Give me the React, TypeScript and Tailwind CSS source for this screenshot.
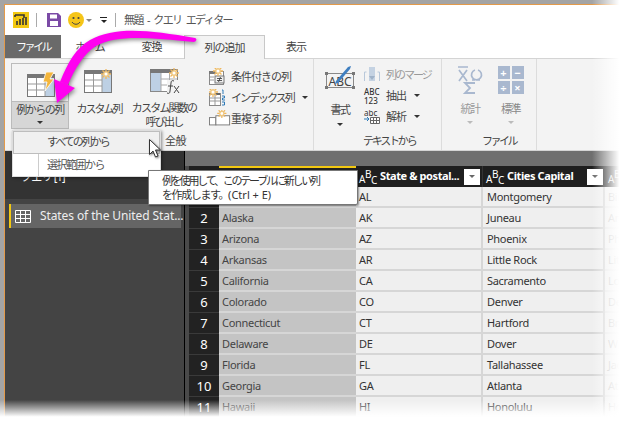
import React from 'react';

const rows = [
  ['1', 'Alabama', 'AL', 'Montgomery', 'Birmingham'],
  ['2', 'Alaska', 'AK', 'Juneau', 'Anchorage'],
  ['3', 'Arizona', 'AZ', 'Phoenix', 'Phoenix'],
  ['4', 'Arkansas', 'AR', 'Little Rock', 'Little Rock'],
  ['5', 'California', 'CA', 'Sacramento', 'Los Angeles'],
  ['6', 'Colorado', 'CO', 'Denver', 'Denver'],
  ['7', 'Connecticut', 'CT', 'Hartford', 'Bridgeport'],
  ['8', 'Delaware', 'DE', 'Dover', 'Wilmington'],
  ['9', 'Florida', 'FL', 'Tallahassee', 'Jacksonville'],
  ['10', 'Georgia', 'GA', 'Atlanta', 'Atlanta'],
  ['11', 'Hawaii', 'HI', 'Honolulu', 'Honolulu'],
];

const Caret = ({ className = 'border-t-[#333]' }: { className?: string }) => (
  <span className={`inline-block h-0 w-0 border-x-[3px] border-t-[3px] border-x-transparent ${className}`} />
);

const Sun = ({ x, y }: { x: number; y: number }) => (
  <g stroke="#f0b860" strokeWidth="1.3">
    <path d={`M${x - 5} ${y}h10M${x} ${y - 5}v10M${x - 3.5} ${y - 3.5}l7 7M${x + 3.5} ${y - 3.5}l-7 7`} />
    <circle cx={x} cy={y} r="2.2" fill="#fff" stroke="#f0c880" />
  </g>
);

const GridIcon = ({ bolt, sun }: { bolt?: boolean; sun?: boolean }) => (
  <svg width="32" height="26" viewBox="0 0 32 26">
    <rect x="1.5" y="2.5" width="27" height="22" fill="#fff" stroke="#777" />
    <rect x="1" y="2" width="28" height="4" fill="#777" />
    <rect x="19" y="6" width="9" height="18" fill="#bdd0e4" />
    <path d="M2 12h17M2 18h17M10.500 6v18M19 6v18" stroke="#999" />
    {sun && <Sun x={23} y={6} />}
    {bolt && <path d="M20 0h8l-4 7h4l-9 12 2-9h-4z" fill="#f4b63c" stroke="#fff" strokeWidth="0.8" />}
  </svg>
);

const FxIcon = () => (
  <svg width="32" height="28" viewBox="0 0 32 28">
    <rect x="0.500" y="2.500" width="27" height="22" fill="#fff" stroke="#888" />
    <rect x="0" y="2" width="24" height="4" fill="#777" />
    <rect x="1" y="6" width="10" height="18" fill="#bdd0e4" />
    <path d="M11 12h16M11 18h16M19.500 6v18M11 6v18" stroke="#aaa" />
    <Sun x={24} y={6} />
    <rect x="17" y="13" width="15" height="15" fill="#f3f3f3" />
    <path d="M24 14c-2-1-3 0-3 2l-1 8c0 2-1 3-3 2M18 19h5M24 19l5 7M29 19l-5 7" fill="none" stroke="#444" />
  </svg>
);

const CondIcon = () => (
  <svg width="17" height="17" viewBox="0 0 17 17">
    <rect x="0.500" y="3.500" width="14" height="13" fill="#fff" stroke="#888" />
    <rect x="0" y="3" width="8" height="3" fill="#777" />
    <path d="M1 9h4M1 12h4" stroke="#999" />
    <rect x="6" y="8" width="9" height="7" fill="#eee" stroke="#777" />
    <path d="M8 10.500h5M8 12.500h5M11.500 9l-2 5" stroke="#333" strokeWidth="0.8" />
    <Sun x={9} y={3} />
  </svg>
);

const IndexIcon = () => (
  <svg width="17" height="17" viewBox="0 0 17 17">
    <rect x="0.500" y="4.500" width="11" height="12" fill="#fff" stroke="#888" />
    <rect x="1" y="4" width="10" height="2" fill="#666" />
    <path d="M1 9h10M1 12h10M6 6v10" stroke="#999" />
    <Sun x={4} y={3} />
    <path d="M13 1h1v4M13 7h2.500v2h-2v2h2.500M13 13h2.500v3H13" fill="none" stroke="#2e7ab8" strokeWidth="1" />
  </svg>
);

const DupIcon = () => (
  <svg width="24" height="17" viewBox="0 0 24 17">
    <rect x="0.500" y="7.500" width="7" height="8" fill="#fff" stroke="#777" />
    <rect x="7.500" y="5.500" width="15" height="10" fill="#fff" stroke="#777" />
    <Sun x={14} y={3} />
  </svg>
);

const MergeIcon = () => (
  <svg width="16" height="15" viewBox="0 0 16 15">
    <path d="M.5 14V5h2M15.500 14V5h-2" fill="none" stroke="#b8c8da" />
    <rect x="5" y="0" width="6" height="14" fill="#c4d2e2" />
    <path d="M5 9l3 4 3-4z" fill="#9fb2c8" />
  </svg>
);

const AbcIcon = () => (
  <svg width="32" height="26" viewBox="0 0 32 26">
    <rect x="2.500" y="9.500" width="27" height="14" fill="none" stroke="#888" />
    <rect x="1" y="8" width="3" height="3" fill="#777" />
    <rect x="28" y="8" width="3" height="3" fill="#777" />
    <rect x="1" y="22" width="3" height="3" fill="#777" />
    <rect x="28" y="22" width="3" height="3" fill="#777" />
    <text x="16" y="22" textAnchor="middle" fontSize="12" fill="#444" fontFamily="Noto Sans">ABC</text>
    <path d="M12 17l12-14 3-1-1 3-12 14-3 1z" fill="#3f7fc0" />
  </svg>
);

const RibbonLabel = ({ children, className = '', tracking = 'tracking-[-1.5px]' }: { children: React.ReactNode; className?: string; tracking?: string }) => (
  <span className={`whitespace-nowrap text-center text-[11px] leading-[13px] text-[#444] ${tracking} ${className}`}>{children}</span>
);

const SmallItem = ({ icon, label, caret, muted, tracking = 'tracking-[-1px]' }: { icon: React.ReactNode; label: string; caret?: boolean; muted?: boolean; tracking?: string }) => (
  <div className="flex h-[21px] items-center">
    <span className="flex w-[22px] shrink-0 items-center">{icon}</span>
    <RibbonLabel tracking={tracking} className={muted ? 'text-[#999]' : ''}>{label}</RibbonLabel>
    {caret && <Caret className="ml-2 border-t-[#333]" />}
  </div>
);

const AbcType = ({ faded }: { faded?: boolean }) => (
  <span className={`flex w-[20px] shrink-0 items-center text-[10px] font-normal leading-none tracking-[-0.5px] ${faded ? 'text-[#ddd]' : 'text-white'}`}>
    <span className="translate-y-[2px]">A</span>
    <span className="-translate-y-[3px]">B</span>
    <span className="translate-y-[3px]">C</span>
  </span>
);

const FilterButton = () => (
  <span className="flex h-[16px] w-[16px] shrink-0 items-center justify-center bg-white">
    <Caret className="border-t-[#666]" />
  </span>
);

export default function App() {
  return (
    <div className="relative h-[421px] w-[626px] overflow-hidden bg-[#a4a4a4] pl-1 pt-1 font-['Noto_Sans','Noto_Sans_CJK_JP',sans-serif] text-[#333]">
      <div className="flex h-full flex-col border-l border-t border-[#e39a4a] bg-white">
        {/* title bar */}
        <div className="flex h-[30px] shrink-0 items-center">
          <span className="ml-2 flex h-[16px] w-[16px] items-center justify-center bg-[#f2c811]">
            <svg width="14" height="14" viewBox="0 0 14 14">
              <path d="M1 2h9v3M1 2v2M3 12V8M6 12V6M9 12V5M12 12V4" fill="none" stroke="#333" strokeWidth="1.600" />
            </svg>
          </span>
          <span className="ml-[7px] h-[14px] w-px bg-[#aaa]" />
          <svg className="ml-[10px]" width="14" height="14" viewBox="0 0 14 14">
            <path d="M0 0h11l3 3v11H0z" fill="#7b4aa6" />
            <rect x="3" y="1.500" width="7" height="4" fill="#fff" />
            <rect x="3" y="8" width="8" height="5" fill="#fff" />
          </svg>
          <svg className="ml-[7px]" width="16" height="16" viewBox="0 0 16 16">
            <circle cx="8" cy="8" r="8" fill="#f5c518" />
            <circle cx="5.500" cy="6" r="1.100" fill="#444" />
            <circle cx="10.500" cy="6" r="1.100" fill="#444" />
            <path d="M4 10c2 3 6 3 8 0" fill="none" stroke="#444" />
          </svg>
          <Caret className="ml-[2px] border-t-[#888]" />
          <span className="ml-[8px] flex flex-col items-center gap-[2px]">
            <span className="h-px w-[7px] bg-[#222]" />
            <Caret className="border-t-[#222]" />
          </span>
          <span className="ml-[8px] h-[14px] w-px bg-[#aaa]" />
          <span className="ml-[8px] text-[11px] tracking-[-1.6px] text-[#555] [word-spacing:3px]">無題 - クエリ エディター</span>
        </div>

        {/* tabs */}
        <div className="relative z-10 flex h-[23px] shrink-0 text-[11px] tracking-[-1px] text-[#444]">
          <div className="flex w-[56px] items-center justify-center bg-[#6a6a6a] pt-px tracking-[-2.500px] text-white">ファイル</div>
          <div className="flex w-[58px] items-center justify-center pt-px">ホーム</div>
          <div className="flex w-[65px] items-center justify-center pt-px">変換</div>
          <div className="flex h-[24px] w-[81px] items-center justify-center border-x border-t border-[#c8c8c8] bg-[#f3f3f3] pt-px">列の追加</div>
          <div className="flex w-[62px] items-center justify-center pt-px">表示</div>
        </div>

        {/* ribbon */}
        <div className="flex h-[93px] shrink-0 border-y border-[#d4d4d4] bg-[#f3f3f3]">
          <div className="relative flex w-[309px] shrink-0 border-r border-[#dcdcdc] pl-[6px] pt-[4px]">
            <div className="flex h-[66px] w-[58px] flex-col items-center border border-[#bbb]">
              <div className="flex h-[37px] items-center justify-center pl-1 pt-1"><GridIcon bolt /></div>
              <div className="flex flex-1 flex-col items-center gap-[5px] self-stretch border-t border-[#bbb] bg-[#d6d6d6] pt-px">
                <RibbonLabel>例からの列</RibbonLabel>
                <Caret />
              </div>
            </div>
            <div className="flex w-[60px] flex-col items-center pt-[5px]">
              <div className="h-[33px]"><GridIcon sun /></div>
              <RibbonLabel tracking="tracking-[-2px]" className="mt-[1px]">カスタム列</RibbonLabel>
            </div>
            <div className="flex w-[70px] flex-col items-center pt-[4px]">
              <div className="h-[34px] pl-1"><FxIcon /></div>
              <RibbonLabel tracking="tracking-[-1.800px]" className="leading-[14px]">カスタム関数の<br />呼び出し</RibbonLabel>
            </div>
            <div className="ml-[10px] flex flex-col pt-[3px]">
              <SmallItem icon={<CondIcon />} label="条件付きの列" />
              <SmallItem icon={<IndexIcon />} label="インデックス列" caret tracking="tracking-[-2px]" />
              <SmallItem icon={<DupIcon />} label="重複する列" />
            </div>
            <RibbonLabel tracking="tracking-[-0.500px]" className="absolute bottom-[3px] left-[160px]">全般</RibbonLabel>
          </div>

          <div className="relative flex w-[128px] shrink-0 border-r border-[#dcdcdc] pl-[10px] pt-[4px]">
            <div className="flex w-[32px] flex-col items-center">
              <div className="h-[37px] pt-[1px]"><AbcIcon /></div>
              <RibbonLabel className="mt-[3px]">書式</RibbonLabel>
              <Caret className="mt-[7px] border-t-[#333]" />
            </div>
            <div className="ml-[8px] flex flex-col pt-[1px]">
              <SmallItem icon={<MergeIcon />} label="列のマージ" muted tracking="tracking-[-2px]" />
              <SmallItem
                icon={<span className="text-[8px] font-medium leading-[9px] text-[#333]">ABC<br />123</span>}
                label="抽出"
                caret
              />
              <SmallItem
                icon={
                  <svg width="16" height="14" viewBox="0 0 16 14">
                    <text x="0" y="6" fontSize="8" fill="#333" fontFamily="Noto Sans">abc</text>
                    <path d="M0 9h5M3 7l2 2-2 2" fill="none" stroke="#2e7ab8" />
                    <path d="M6.500 7.500h9v6h-9zM6.500 10.500h9M9.500 7.500v6M12.500 7.500v6" fill="#fff" stroke="#666" />
                  </svg>
                }
                label="解析"
                caret
              />
            </div>
            <RibbonLabel tracking="tracking-[-2.200px]" className="absolute bottom-[3px] left-[49px]">テキストから</RibbonLabel>
          </div>

          <div className="relative flex w-[95px] shrink-0 border-r border-[#dcdcdc] pl-[14px] pt-[7px]">
            <div className="flex w-[28px] flex-col items-center">
              <svg width="26" height="28" viewBox="0 0 26 28">
                <path d="M1 1h10M2 4l8 11M10 4L2 15M18 4a5 5 0 1 0 3 0M15 14h3M19 14h4" fill="none" stroke="#a9b8cf" strokeWidth="1.700" />
                <path d="M18 17H8l5 5-5 5h10" fill="none" stroke="#a9b8cf" strokeWidth="1.800" />
              </svg>
              <RibbonLabel className="mt-[8px] text-[#999]">統計</RibbonLabel>
              <Caret className="mt-[6px] border-t-[#bbb]" />
            </div>
            <div className="ml-[13px] flex w-[27px] flex-col items-center">
              <div className="grid h-[28px] grid-cols-2 gap-[2px] text-center text-[11px] font-bold leading-[13px] text-white">
                {['+', '−', '÷', '×'].map((s) => (
                  <span key={s} className="h-[13px] w-[12px] bg-[#a9b8cf]">{s}</span>
                ))}
              </div>
              <RibbonLabel className="mt-[8px] text-[#888]">標準</RibbonLabel>
              <Caret className="mt-[6px] border-t-[#bbb]" />
            </div>
            <RibbonLabel tracking="tracking-[-2.500px]" className="absolute bottom-[3px] left-[40px]">ファイル</RibbonLabel>
          </div>
        </div>

        {/* body */}
        <div className="flex min-h-0 flex-1">
          <div className="w-[180px] shrink-0 border-r border-black bg-[#444]">
            <div className="h-[48px] bg-[#333] pl-[16px] pt-[18px] text-[11px] tracking-[-0.8px] text-white">クエリ [1]</div>
            <div className="ml-[4px] mt-[5px] flex h-[24px] w-[172px] items-center border-l-2 border-[#f2c811] bg-[#656565] pl-[4px] text-[12px] text-[#eee]">
              <svg width="16" height="13" viewBox="0 0 16 13" className="shrink-0">
                <path d="M.5.500h15v12H.5zM.5 4.500h15M.5 8.500h15M5.500.500v12M10.500.500v12" fill="none" stroke="#fff" />
              </svg>
              <span className="ml-[9px] whitespace-nowrap tracking-[-0.1px]">States of the United Stat...</span>
            </div>
          </div>

          <div className="min-w-0 flex-1 bg-[#4a4a4a]">
            <div className="h-[15px] bg-[#6f6f6f]" />
            <div className="ml-[4px] w-[460px]">
              <div className="flex h-[21px] bg-[#1f1f1f] text-[11px] font-bold text-white">
                <div className="w-[30px]" />
                <div className="w-[137px] border-t-2 border-[#f2c811] bg-[#222]" />
                <div className="flex w-[127px] items-center border-r border-[#333] pl-[3px] pr-[2px]">
                  <AbcType />
                  <span className="ml-px min-w-0 flex-1 overflow-hidden whitespace-nowrap tracking-[-0.4px]">State &amp; postal...</span>
                  <FilterButton />
                </div>
                <div className="flex w-[122px] items-center pl-[3px] pr-[2px]">
                  <AbcType />
                  <span className="ml-px min-w-0 flex-1 overflow-hidden whitespace-nowrap tracking-[-0.4px]">Cities Capital</span>
                  <FilterButton />
                </div>
                <div className="flex w-[44px] items-center pl-[3px]"><AbcType faded /></div>
              </div>
              {rows.map(([n, state, code, capital, city]) => (
                <div key={n} className="flex h-[21px] text-[11px] leading-[20px] tracking-[-0.3px]">
                  <div className="w-[30px] border-b border-[#3a3a3a] bg-[#222] text-center text-[13px] tracking-normal text-white">{n}</div>
                  <div className="w-[137px] border-b-2 border-[#d6d6d6] bg-[#c4c4c4] pl-[3px] text-[#444]">{state}</div>
                  <div className="w-[127px] border-b-2 border-r-2 border-[#d6d6d6] bg-[#efefef] pl-[3px] text-[#333]">{code}</div>
                  <div className="w-[122px] border-b-2 border-r-2 border-[#d6d6d6] bg-[#efefef] pl-[4px] text-[#333]">{capital}</div>
                  <div className="w-[44px] overflow-hidden whitespace-nowrap border-b-2 border-[#e6e6e6] bg-[#efefef] pl-[3px] text-[#bbb]">{city}</div>
                </div>
              ))}
            </div>
          </div>
        </div>
      </div>

      {/* dropdown menu */}
      <div className="absolute left-[12px] top-[130px] z-20 h-[47px] w-[149px] border border-[#ddd] bg-white text-[11px] text-[#444] shadow-[1px_1px_3px_rgba(0,0,0,0.45)]">
        <div className="flex h-[23px] items-center border border-[#bdbdbd] bg-[#f0f0f0] pl-[33px] tracking-[-2px]">すべての列から</div>
        <div className="ml-[25px] flex h-[22px] items-center border-l border-[#ccc] pl-[8px] tracking-[-1.5px] text-[#555]">選択範囲から</div>
      </div>

      {/* tooltip */}
      <div className="absolute left-[148px] top-[170px] z-20 h-[35px] w-[210px] rounded-br-[2px] border border-[#777] bg-white pl-[13px] pt-[3px] text-[11px] leading-[14px] text-[#333] shadow-[1px_1px_2px_rgba(0,0,0,0.4)]">
        <div className="whitespace-nowrap tracking-[-2.200px]">例を使用して、このテーブルに新しい列</div>
        <div className="whitespace-nowrap tracking-[-1.400px]">を作成します。<span className="tracking-normal">(Ctrl + E)</span></div>
      </div>

      {/* cursor */}
      <svg className="absolute left-[149px] top-[139px] z-30 drop-shadow-[1px_1px_1px_rgba(0,0,0,0.5)]" width="13" height="20" viewBox="0 0 13 20">
        <path d="M.5.500v15l3.500-3.500 2.500 6 2.500-1-2.500-6h5z" fill="#fff" stroke="#333" />
      </svg>

      {/* callout arrow */}
      <svg className="absolute left-0 top-0 z-30 drop-shadow-[1px_2px_2px_rgba(0,0,0,0.45)]" width="210" height="110" viewBox="0 0 210 110">
        <path d="M195 38C150 30 115 26 90 40 76 48 68 62 60 82L68 85C75 68 84 54 96 46 118 34 150 38 194 42 197 41 197 39 195 38z" fill="#ff00f0" />
        <path d="M54 79l21 9-18 15z" fill="#ff00f0" />
      </svg>

      {/* torn edge fades */}
      <div className="absolute bottom-0 right-0 top-0 z-40 w-[34px] bg-linear-to-r from-transparent to-white to-80%" />
      <div className="absolute bottom-0 left-0 right-0 z-40 h-[21px] bg-linear-to-b from-transparent to-white to-80%" />
    </div>
  );
}
